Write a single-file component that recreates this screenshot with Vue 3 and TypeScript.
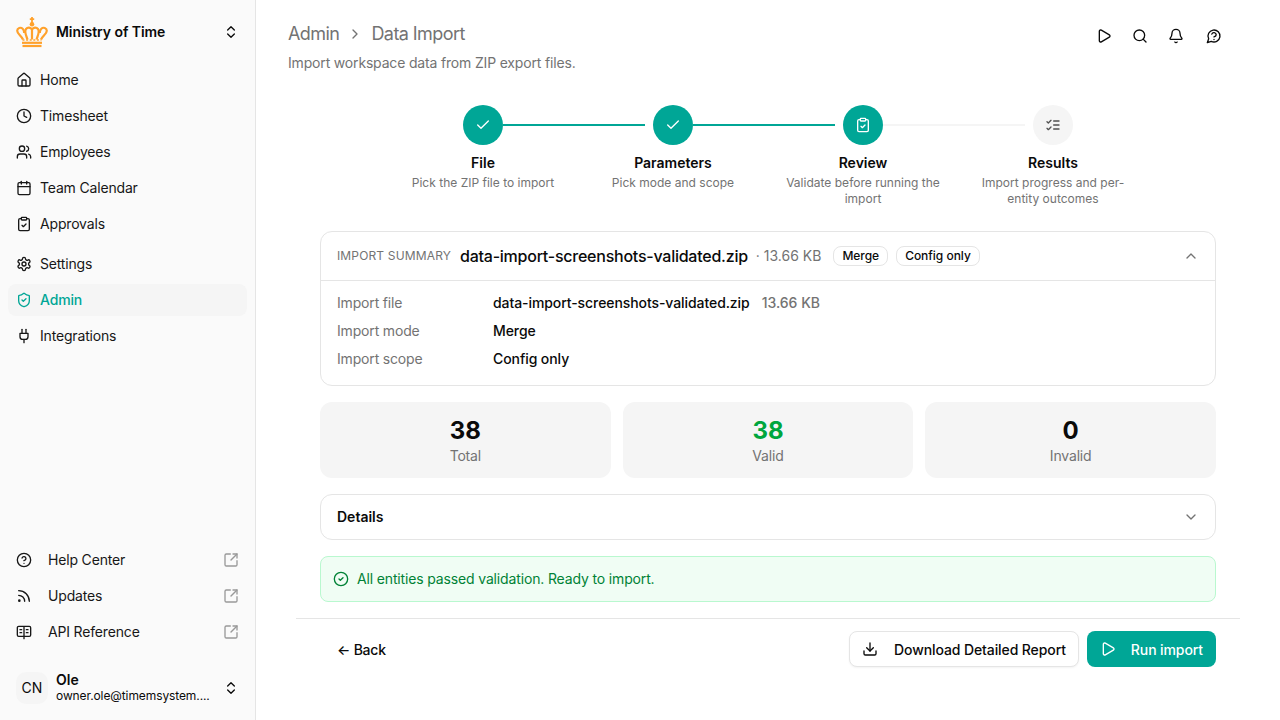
<script setup lang="ts">
import { h } from 'vue'

const CHECK_CIRCLE = 'M12 2a10 10 0 1 0 0 20 10 10 0 0 0 0-20z'
const QUESTION = ['M9.09 9a3 3 0 0 1 5.83 1c0 2-3 3-3 3', 'M12 17h.01']

const icons: Record<string, string[]> = {
  home: ['M15 21v-8a1 1 0 0 0-1-1h-4a1 1 0 0 0-1 1v8', 'M3 10a2 2 0 0 1 .709-1.528l7-5.999a2 2 0 0 1 2.582 0l7 5.999A2 2 0 0 1 21 10v9a2 2 0 0 1-2 2H5a2 2 0 0 1-2-2z'],
  clock: [CHECK_CIRCLE, 'M12 6v6l4 2'],
  users: ['M16 21v-2a4 4 0 0 0-4-4H6a4 4 0 0 0-4 4v2', 'M9 3a4 4 0 1 0 0 8 4 4 0 0 0 0-8z', 'M22 21v-2a4 4 0 0 0-3-3.87', 'M16 3.13a4 4 0 0 1 0 7.75'],
  calendar: ['M8 2v4', 'M16 2v4', 'M5 4h14a2 2 0 0 1 2 2v14a2 2 0 0 1-2 2H5a2 2 0 0 1-2-2V6a2 2 0 0 1 2-2z', 'M3 10h18'],
  clipboard: ['M9 2h6a1 1 0 0 1 1 1v2a1 1 0 0 1-1 1H9a1 1 0 0 1-1-1V3a1 1 0 0 1 1-1z', 'M16 4h2a2 2 0 0 1 2 2v14a2 2 0 0 1-2 2H6a2 2 0 0 1-2-2V6a2 2 0 0 1 2-2h2', 'm9 14 2 2 4-4'],
  settings: ['M12.22 2h-.44a2 2 0 0 0-2 2v.18a2 2 0 0 1-1 1.73l-.43.25a2 2 0 0 1-2 0l-.15-.08a2 2 0 0 0-2.73.73l-.22.38a2 2 0 0 0 .73 2.73l.15.1a2 2 0 0 1 1 1.72v.51a2 2 0 0 1-1 1.74l-.15.09a2 2 0 0 0-.73 2.73l.22.38a2 2 0 0 0 2.73.73l.15-.08a2 2 0 0 1 2 0l.43.25a2 2 0 0 1 1 1.73V20a2 2 0 0 0 2 2h.44a2 2 0 0 0 2-2v-.18a2 2 0 0 1 1-1.73l.43-.25a2 2 0 0 1 2 0l.15.08a2 2 0 0 0 2.73-.73l.22-.39a2 2 0 0 0-.73-2.73l-.15-.08a2 2 0 0 1-1-1.74v-.5a2 2 0 0 1 1-1.74l.15-.09a2 2 0 0 0 .73-2.73l-.22-.38a2 2 0 0 0-2.73-.73l-.15.08a2 2 0 0 1-2 0l-.43-.25a2 2 0 0 1-1-1.73V4a2 2 0 0 0-2-2z', 'M12 9a3 3 0 1 0 0 6 3 3 0 0 0 0-6z'],
  shield: ['M20 13c0 5-3.5 7.5-7.66 8.95a1 1 0 0 1-.67-.01C7.5 20.5 4 18 4 13V6a1 1 0 0 1 1-1c2 0 4.5-1.2 6.24-2.72a1.17 1.17 0 0 1 1.52 0C14.51 3.81 17 5 19 5a1 1 0 0 1 1 1z', 'm9 12 2 2 4-4'],
  plug: ['M12 22v-5', 'M9 8V2', 'M15 8V2', 'M18 8v5a4 4 0 0 1-4 4h-4a4 4 0 0 1-4-4V8Z'],
  help: [CHECK_CIRCLE, ...QUESTION],
  rss: ['M4 11a9 9 0 0 1 9 9', 'M4 4a16 16 0 0 1 16 16', 'M5 18a1 1 0 1 0 0 2 1 1 0 0 0 0-2z'],
  book: ['M12 4v18', 'M4 3.500h16a2 2 0 0 1 2 2v11a2 2 0 0 1-2 2H4a2 2 0 0 1-2-2v-11a2 2 0 0 1 2-2z', 'M6 8.500h2.500', 'M6 13h2.500', 'M15.500 8.500H18', 'M15.500 13H18'],
  external: ['M21 13v6a2 2 0 0 1-2 2H5a2 2 0 0 1-2-2V5a2 2 0 0 1 2-2h6', 'm21 3-9 9', 'M15 3h6v6'],
  updown: ['m7 15 5 5 5-5', 'm7 9 5-5 5 5'],
  play: ['M5 5a2 2 0 0 1 3.008-1.728l11.997 6.998a2 2 0 0 1 .003 3.458l-12 7A2 2 0 0 1 5 19z'],
  search: ['m21 21-4.34-4.34', 'M11 3a8 8 0 1 0 0 16 8 8 0 0 0 0-16z'],
  bell: ['M10.268 21a2 2 0 0 0 3.464 0', 'M3.262 15.326A1 1 0 0 0 4 17h16a1 1 0 0 0 .74-1.673C19.41 13.956 18 12.499 18 8A6 6 0 0 0 6 8c0 4.499-1.411 5.956-2.738 7.326'],
  message: ['M7.900 20A9 9 0 1 0 4 16.100L2 22Z', 'M8.700 9.200a3.400 3.400 0 0 1 6.600 1c0 2.200-3.300 3.200-3.300 3.200', 'M12 17.200h.01'],
  listChecks: ['m3 17 2 2 4-4', 'm3 7 2 2 4-4', 'M13 6h8', 'M13 12h8', 'M13 18h8'],
  check: ['M20 6 9 17l-5-5'],
  circleCheck: [CHECK_CIRCLE, 'm9 12 2 2 4-4'],
  chevronUp: ['m18 15-6-6-6 6'],
  chevronDown: ['m6 9 6 6 6-6'],
  chevronRight: ['m9 18 6-6-6-6'],
  download: ['M12 15V3', 'M21 15v4a2 2 0 0 1-2 2H5a2 2 0 0 1-2-2v-4', 'm7 10 5 5 5-5']
}

const Icon = (props: { name: string }) =>
  h(
    'svg',
    {
      viewBox: '0 0 24 24',
      fill: 'none',
      stroke: 'currentColor',
      'stroke-width': 2,
      'stroke-linecap': 'round',
      'stroke-linejoin': 'round'
    },
    icons[props.name].map(d => h('path', { d }))
  )
Icon.props = ['name']

interface NavItem {
  label: string
  icon: string
  active?: boolean
}

const mainNav: NavItem[] = [
  { label: 'Home', icon: 'home' },
  { label: 'Timesheet', icon: 'clock' },
  { label: 'Employees', icon: 'users' },
  { label: 'Team Calendar', icon: 'calendar' },
  { label: 'Approvals', icon: 'clipboard' }
]

const adminNav: NavItem[] = [
  { label: 'Settings', icon: 'settings' },
  { label: 'Admin', icon: 'shield', active: true },
  { label: 'Integrations', icon: 'plug' }
]

const linkNav: NavItem[] = [
  { label: 'Help Center', icon: 'help' },
  { label: 'Updates', icon: 'rss' },
  { label: 'API Reference', icon: 'book' }
]

const steps = [
  { title: 'File', desc: 'Pick the ZIP file to import', icon: 'check', done: true },
  { title: 'Parameters', desc: 'Pick mode and scope', icon: 'check', done: true },
  { title: 'Review', desc: 'Validate before running the import', icon: 'clipboard', done: true },
  { title: 'Results', desc: 'Import progress and per-entity outcomes', icon: 'listChecks', done: false }
]

const stats = [
  { value: 38, label: 'Total', valid: false },
  { value: 38, label: 'Valid', valid: true },
  { value: 0, label: 'Invalid', valid: false }
]

const fileName = 'data-import-screenshots-validated.zip'
const fileSize = '13.66 KB'
</script>

<template>
  <div class="layout">
    <aside class="sidebar">
      <div class="org">
        <svg class="crown" viewBox="0 0 32 32" fill="none" stroke="#ffa12b" stroke-linecap="butt">
          <path d="M16 1v6M13.800 3.200h4.400" stroke-width="1.800" />
          <circle cx="16" cy="8.200" r="2.300" fill="#ffa12b" stroke="none" />
          <path d="M7 23.500C5.500 20 1.200 18 1.200 14.700c0-2.800 3.500-3.800 5.500-2 1.300 1.200 1.500 2.800 1.500 4.300" stroke-width="2.200" />
          <path d="M25 23.500c1.500-3.500 5.800-5.500 5.800-8.800 0-2.800-3.500-3.800-5.500-2-1.300 1.200-1.500 2.800-1.500 4.300" stroke-width="2.200" />
          <path d="M11.500 23.500C10 19 8 15.500 10 13c1.600-2 4.600-1.800 6 .500 1.400-2.300 4.400-2.500 6-.500 2 2.500 0 6-1.500 10.500M16 13.500v10" stroke-width="2.200" />
          <path d="M6.500 24h19" stroke-width="1.400" stroke-dasharray="2 1.600" />
          <path d="M6 26.800h20" stroke-width="2.200" />
          <path d="M6.500 30h19" stroke-width="2.200" />
        </svg>
        <span class="org-name">Ministry of Time</span>
        <Icon name="updown" class="updown" />
      </div>

      <nav class="nav">
        <a v-for="item in mainNav" :key="item.label" class="nav-item">
          <Icon :name="item.icon" class="nav-icon" />
          <span>{{ item.label }}</span>
        </a>
      </nav>

      <nav class="nav second">
        <a v-for="item in adminNav" :key="item.label" :class="['nav-item', { active: item.active }]">
          <Icon :name="item.icon" class="nav-icon" />
          <span>{{ item.label }}</span>
        </a>
      </nav>

      <nav class="nav links">
        <a v-for="item in linkNav" :key="item.label" class="nav-item link">
          <Icon :name="item.icon" class="nav-icon" />
          <span class="link-label">{{ item.label }}</span>
          <Icon name="external" class="ext-icon" />
        </a>
      </nav>

      <div class="user">
        <div class="avatar">CN</div>
        <div class="user-info">
          <div class="user-name">Ole</div>
          <div class="user-mail">owner.ole@timemsystem....</div>
        </div>
        <Icon name="updown" class="updown" />
      </div>
    </aside>

    <main class="main">
      <header class="page-head">
        <div>
          <div class="crumbs">
            <span>Admin</span>
            <Icon name="chevronRight" class="crumb-sep" />
            <span>Data Import</span>
          </div>
          <p class="subtitle">Import workspace data from ZIP export files.</p>
        </div>
        <div class="head-actions">
          <button class="icon-btn"><Icon name="play" /></button>
          <button class="icon-btn"><Icon name="search" /></button>
          <button class="icon-btn"><Icon name="bell" /></button>
          <button class="icon-btn help"><Icon name="message" /></button>
        </div>
      </header>

      <div class="content">
        <div class="stepper">
          <div v-for="(step, i) in steps" :key="step.title" class="step">
            <div
              v-if="i < steps.length - 1"
              :class="['connector', { on: steps[i + 1].done }]"
            ></div>
            <div :class="['step-circle', { on: step.done }]">
              <Icon :name="step.icon" />
            </div>
            <div class="step-title">{{ step.title }}</div>
            <div class="step-desc">{{ step.desc }}</div>
          </div>
        </div>

        <section class="card summary">
          <div class="summary-head">
            <span class="eyebrow">IMPORT SUMMARY</span>
            <span class="head-file">{{ fileName }}</span>
            <span class="head-size">· {{ fileSize }}</span>
            <span class="badge first">Merge</span>
            <span class="badge">Config only</span>
            <Icon name="chevronUp" class="card-chevron" />
          </div>
          <div class="summary-body">
            <div class="row">
              <span class="row-label">Import file</span>
              <span class="row-value">{{ fileName }}</span>
              <span class="row-size">{{ fileSize }}</span>
            </div>
            <div class="row">
              <span class="row-label">Import mode</span>
              <span class="row-value">Merge</span>
            </div>
            <div class="row">
              <span class="row-label">Import scope</span>
              <span class="row-value">Config only</span>
            </div>
          </div>
        </section>

        <div class="stats">
          <div v-for="stat in stats" :key="stat.label" class="stat">
            <div :class="['stat-value', { valid: stat.valid }]">{{ stat.value }}</div>
            <div class="stat-label">{{ stat.label }}</div>
          </div>
        </div>

        <section class="card details">
          <span>Details</span>
          <Icon name="chevronDown" class="card-chevron" />
        </section>

        <div class="alert">
          <Icon name="circleCheck" class="alert-icon" />
          <span>All entities passed validation. Ready to import.</span>
        </div>
      </div>

      <footer class="footer">
        <button class="btn ghost">← Back</button>
        <div class="footer-right">
          <button class="btn outline"><Icon name="download" class="btn-icon" />Download Detailed Report</button>
          <button class="btn primary"><Icon name="play" class="btn-icon" />Run import</button>
        </div>
      </footer>
    </main>
  </div>
</template>

<style>
html,
body {
  margin: 0;
  background: #fff;
}
</style>

<style scoped>
.layout {
  display: flex;
  height: 720px;
  overflow: hidden;
  font-family: Inter, 'Liberation Sans', sans-serif;
  font-size: 14px;
  line-height: 20px;
  letter-spacing: -0.17px;
  color: #0a0a0a;
}

.sidebar {
  width: 255px;
  flex-shrink: 0;
  display: flex;
  flex-direction: column;
  background: #fafafa;
  border-right: 1px solid #e5e5e5;
}

.org {
  display: flex;
  align-items: center;
  height: 32px;
  padding: 16px;
}

.crown {
  width: 32px;
  height: 32px;
  margin-right: 8px;
}

.org-name {
  flex: 1;
  font-weight: 600;
  letter-spacing: -0.06px;
}

.updown {
  width: 16px;
  height: 16px;
  flex-shrink: 0;
}

.nav {
  display: flex;
  flex-direction: column;
  gap: 4px;
  padding: 0 8px;
}

.second {
  margin-top: 8px;
}

.links {
  margin-top: auto;
}

.nav-item {
  display: flex;
  align-items: center;
  gap: 8px;
  height: 32px;
  padding: 0 8px;
  border-radius: 8px;
  color: #171717;
}

.nav-item.active {
  background: #f5f5f5;
  color: #00a696;
  font-weight: 500;
}

.nav-item.link {
  gap: 16px;
}

.link-label {
  flex: 1;
}

.nav-icon {
  width: 16px;
  height: 16px;
  flex-shrink: 0;
}

.ext-icon {
  width: 16px;
  height: 16px;
  color: #999;
}

.user {
  display: flex;
  align-items: center;
  gap: 8px;
  margin-top: 24px;
  padding: 0 16px 16px;
}

.avatar {
  width: 32px;
  height: 32px;
  flex-shrink: 0;
  display: flex;
  align-items: center;
  justify-content: center;
  border-radius: 10px;
  background: #f5f5f5;
  letter-spacing: 0;
}

.user-info {
  width: 159px;
  flex-shrink: 0;
}

.user-name {
  font-weight: 600;
  line-height: 16px;
  letter-spacing: 0;
}

.user-mail {
  font-size: 12px;
  line-height: 16px;
  letter-spacing: -0.1px;
  white-space: nowrap;
}

.main {
  flex: 1;
  min-width: 0;
  display: flex;
  flex-direction: column;
  background: #fff;
}

.page-head {
  display: flex;
  justify-content: space-between;
  padding: 20px 48px 0 32px;
}

.crumbs {
  display: flex;
  align-items: center;
  font-size: 18px;
  line-height: 28px;
  letter-spacing: -0.56px;
  color: #737373;
}

.crumb-sep {
  width: 16px;
  height: 16px;
  margin: 0 8px;
}

.subtitle {
  margin: 5px 0 0;
  color: #737373;
}

.head-actions {
  display: flex;
  margin-top: -2px;
  height: 36px;
}

.icon-btn {
  width: 36px;
  height: 36px;
  padding: 0;
  display: flex;
  align-items: center;
  justify-content: center;
  border: none;
  background: none;
  color: #0a0a0a;
}

.icon-btn svg {
  width: 16px;
  height: 16px;
}

.icon-btn.help {
  margin-left: 2px;
}

.content {
  width: 896px;
  margin: 32px auto 0;
  display: flex;
  flex-direction: column;
  gap: 16px;
}

.stepper {
  display: grid;
  grid-template-columns: repeat(4, 190px);
  justify-content: center;
  margin-bottom: 8px;
}

.step {
  position: relative;
  display: flex;
  flex-direction: column;
  align-items: center;
  text-align: center;
}

.connector {
  position: absolute;
  top: 19px;
  left: calc(50% + 20px);
  width: 142px;
  height: 2px;
  background: #f5f5f5;
}

.connector.on {
  background: #00a696;
}

.step-circle {
  width: 40px;
  height: 40px;
  margin-bottom: 8px;
  display: flex;
  align-items: center;
  justify-content: center;
  border-radius: 50%;
  background: #f5f5f5;
  color: #525252;
}

.step-circle.on {
  background: #00a696;
  color: #fff;
}

.step-circle svg {
  width: 16px;
  height: 16px;
}

.step-title {
  font-weight: 600;
  letter-spacing: 0;
}

.step-desc {
  width: 160px;
  margin-top: 2px;
  font-size: 12px;
  line-height: 16px;
  letter-spacing: 0.01px;
  color: #737373;
}

.card {
  border: 1px solid #e5e5e5;
  border-radius: 12px;
  background: #fff;
}

.summary-head {
  display: flex;
  align-items: center;
  height: 48px;
  padding: 0 16px;
  border-bottom: 1px solid #e5e5e5;
}

.eyebrow {
  font-size: 12px;
  letter-spacing: 0.15px;
  color: #737373;
}

.head-file {
  margin-left: 9px;
  font-size: 16px;
  font-weight: 500;
  letter-spacing: -0.24px;
}

.head-size {
  margin-left: 8px;
  letter-spacing: 0;
  color: #737373;
}

.badge {
  margin-left: 8px;
  padding: 0 8px;
  height: 20px;
  line-height: 18px;
  box-sizing: border-box;
  border: 1px solid #e5e5e5;
  border-radius: 8px;
  font-size: 12px;
  font-weight: 500;
  letter-spacing: -0.03px;
}

.badge.first {
  margin-left: 12px;
}

.card-chevron {
  width: 16px;
  height: 16px;
  margin-left: auto;
  color: #737373;
}

.summary-body {
  display: flex;
  flex-direction: column;
  gap: 8px;
  padding: 12px 16px 16px;
}

.row {
  display: flex;
}

.row-label {
  width: 156px;
  color: #737373;
}

.row-value {
  font-weight: 500;
  letter-spacing: -0.08px;
}

.row-size {
  margin-left: 12px;
  font-weight: 500;
  letter-spacing: 0;
  color: #737373;
}

.stats {
  display: grid;
  grid-template-columns: repeat(3, 1fr);
  gap: 12px;
}

.stat {
  padding: 14px 12px 12px;
  border-radius: 12px;
  background: #f5f5f5;
  text-align: center;
}

.stat-value {
  font-size: 24px;
  line-height: 30px;
  font-weight: 700;
  letter-spacing: 0;
}

.stat-value.valid {
  color: #00a63e;
}

.stat-label {
  color: #737373;
}

.details {
  display: flex;
  align-items: center;
  height: 44px;
  padding: 0 16px;
  font-weight: 600;
  letter-spacing: 0;
}

.alert {
  display: flex;
  align-items: center;
  gap: 8px;
  height: 44px;
  padding: 0 12px;
  border: 1px solid #b9f8cf;
  border-radius: 8px;
  background: #f0fdf4;
  letter-spacing: -0.15px;
  color: #008236;
}

.alert-icon {
  width: 16px;
  height: 16px;
}

.footer {
  width: 896px;
  margin: 16px auto 0;
  padding: 12px 24px 0;
  display: flex;
  align-items: center;
  justify-content: space-between;
  border-top: 1px solid #e5e5e5;
}

.footer-right {
  display: flex;
  gap: 8px;
}

.btn {
  display: flex;
  align-items: center;
  height: 36px;
  box-sizing: border-box;
  font-family: inherit;
  font-size: 14px;
  font-weight: 500;
  letter-spacing: -0.1px;
  border-radius: 8px;
  border: 1px solid transparent;
  color: #0a0a0a;
  background: none;
}

.btn.ghost {
  padding: 0 16px;
  letter-spacing: -0.22px;
}

.btn.outline {
  padding: 0 12px;
  gap: 16px;
  background: #fff;
  border-color: #e5e5e5;
  box-shadow: 0 1px 2px rgba(0, 0, 0, 0.05);
}

.btn.primary {
  padding: 0 12px;
  gap: 15px;
  background: #00a696;
  color: #fff;
}

.btn-icon {
  width: 16px;
  height: 16px;
}
</style>
